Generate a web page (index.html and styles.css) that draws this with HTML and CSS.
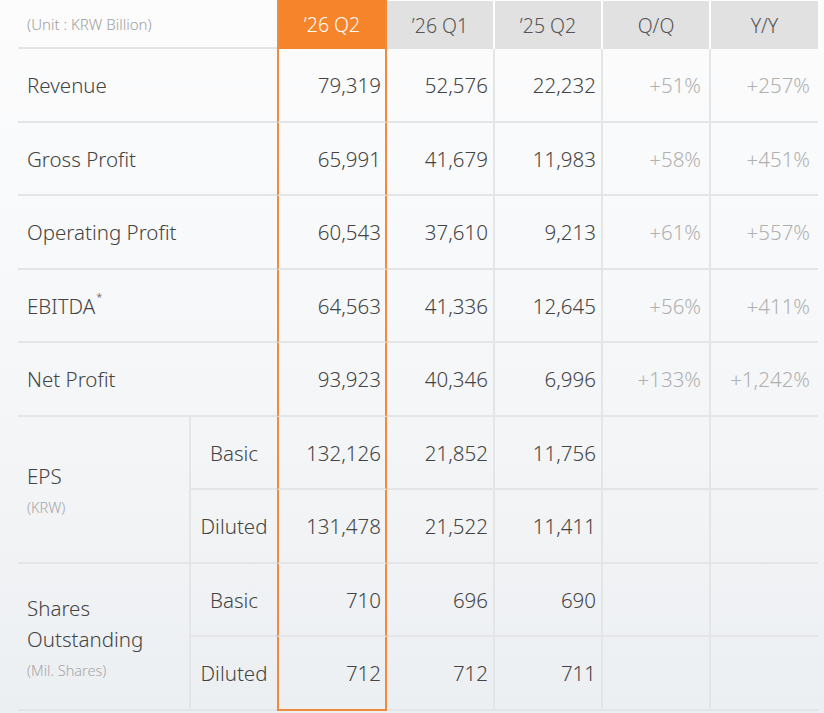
FILE: index.html
```html
<!DOCTYPE html>
<html lang="en">
<head>
<meta charset="utf-8">
<title>Earnings Summary</title>
<link rel="stylesheet" href="styles.css">
</head>
<body>
<div class="page">
<table class="fin">
  <colgroup>
    <col class="c-lab">
    <col class="c-sub">
    <col class="c-cur">
    <col class="c-q1">
    <col class="c-q2">
    <col class="c-qq">
    <col class="c-yy">
  </colgroup>
  <thead>
    <tr class="hrow">
      <th class="unit" colspan="2">(Unit : KRW Billion)</th>
      <th class="h cur">’26 Q2</th>
      <th class="h q1">’26 Q1</th>
      <th class="h gap">’25 Q2</th>
      <th class="h gap">Q/Q</th>
      <th class="h gap">Y/Y</th>
    </tr>
  </thead>
  <tbody>
    <tr>
      <td class="lab" colspan="2">Revenue</td>
      <td class="num cur">79,319</td>
      <td class="num">52,576</td>
      <td class="num vl">22,232</td>
      <td class="pct vl">+51%</td>
      <td class="pct vl">+257%</td>
    </tr>
    <tr>
      <td class="lab" colspan="2">Gross Profit</td>
      <td class="num cur">65,991</td>
      <td class="num">41,679</td>
      <td class="num vl">11,983</td>
      <td class="pct vl">+58%</td>
      <td class="pct vl">+451%</td>
    </tr>
    <tr>
      <td class="lab" colspan="2">Operating Profit</td>
      <td class="num cur">60,543</td>
      <td class="num">37,610</td>
      <td class="num vl">9,213</td>
      <td class="pct vl">+61%</td>
      <td class="pct vl">+557%</td>
    </tr>
    <tr>
      <td class="lab" colspan="2">EBITDA<sup class="ast">*</sup></td>
      <td class="num cur">64,563</td>
      <td class="num">41,336</td>
      <td class="num vl">12,645</td>
      <td class="pct vl">+56%</td>
      <td class="pct vl">+411%</td>
    </tr>
    <tr>
      <td class="lab" colspan="2">Net Profit</td>
      <td class="num cur">93,923</td>
      <td class="num">40,346</td>
      <td class="num vl">6,996</td>
      <td class="pct vl">+133%</td>
      <td class="pct vl">+1,242%</td>
    </tr>
    <tr>
      <td class="lab grp" rowspan="2">
        <div class="gname">EPS</div>
        <div class="gunit">(KRW)</div>
      </td>
      <td class="sub">Basic</td>
      <td class="num cur">132,126</td>
      <td class="num">21,852</td>
      <td class="num vl">11,756</td>
      <td class="pct vl"></td>
      <td class="pct vl"></td>
    </tr>
    <tr>
      <td class="sub">Diluted</td>
      <td class="num cur">131,478</td>
      <td class="num">21,522</td>
      <td class="num vl">11,411</td>
      <td class="pct vl"></td>
      <td class="pct vl"></td>
    </tr>
    <tr>
      <td class="lab grp" rowspan="2">
        <div class="gname">Shares<br>Outstanding</div>
        <div class="gunit">(Mil. Shares)</div>
      </td>
      <td class="sub">Basic</td>
      <td class="num cur">710</td>
      <td class="num">696</td>
      <td class="num vl">690</td>
      <td class="pct vl"></td>
      <td class="pct vl"></td>
    </tr>
    <tr class="last">
      <td class="sub">Diluted</td>
      <td class="num cur">712</td>
      <td class="num">712</td>
      <td class="num vl">711</td>
      <td class="pct vl"></td>
      <td class="pct vl"></td>
    </tr>
  </tbody>
</table>
</div>
</body>
</html>
```

FILE: styles.css
```css
html, body {
  margin: 0;
  padding: 0;
}

body {
  width: 824px;
  height: 713px;
  overflow: hidden;
  font-family: "Noto Sans", "Open Sans", "Liberation Sans", sans-serif;
  font-weight: 300;
  color: #464646;
  background: linear-gradient(180deg, #fcfcfd 0%, #f8f9fa 35%, #f1f3f5 75%, #eceff2 100%);
}

th, td {
  padding: 0;
  box-sizing: border-box;
}

.page {
  padding-left: 18px;
}

.fin {
  border-collapse: separate;
  border-spacing: 0;
  table-layout: fixed;
  width: 800px;
}

.c-lab { width: 173px; }
.c-sub { width: 86px; }
.c-cur { width: 110px; }
.c-q1 { width: 106px; }
.c-q2 { width: 108px; }
.c-qq { width: 108px; }
.c-yy { width: 109px; }

/* header */
.hrow {
  height: 49px;
}

.unit {
  text-align: left;
  font-weight: 300;
  font-size: 15px;
  color: #a0a0a0;
  padding-left: 9px;
  border-bottom: 2px solid #e3e4e6;
  vertical-align: middle;
}

.h {
  font-weight: 300;
  font-size: 19.5px;
  color: #555555;
  text-align: center;
  background: #e1e1e1;
  border-top: 1px solid transparent;
  background-clip: padding-box;
  vertical-align: middle;
}

.h.gap {
  border-left: 2px solid #ffffff;
}

.h.cur {
  background: #f5842a;
  color: #ffffff;
  border-top: 0;
}

/* body rows */
tbody tr {
  height: 73.5px;
}

tbody td {
  border-bottom: 2px solid #e4e5e7;
  vertical-align: middle;
  font-size: 20.5px;
  padding-top: 1px;
}

.lab {
  padding-left: 9px;
  color: #444444;
}

.ast {
  font-size: 11px;
  vertical-align: top;
  position: relative;
  top: -3px;
  margin-left: 1px;
}

.grp {
  border-right: 2px solid #e4e5e7;
}

.gname {
  line-height: 31px;
}

.gunit {
  font-size: 14.5px;
  color: #a6a6a6;
  line-height: 22px;
  margin-top: 4px;
}

.sub {
  text-align: center;
  color: #444444;
}

.num {
  text-align: right;
  padding-right: 5px;
  color: #444444;
}

.pct {
  text-align: right;
  padding-right: 8px;
  color: #b0b0b0;
}

.vl {
  border-left: 2px solid #e4e5e7;
}

.cur {
  border-left: 2px solid #f08a3c;
  border-right: 2px solid #f08a3c;
}

.num.cur {
  padding-right: 4px;
}

.last .cur {
  border-bottom-color: #f08a3c;
}
```
